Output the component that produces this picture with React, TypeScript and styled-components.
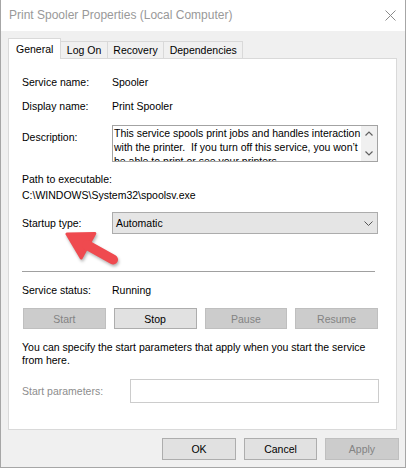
import { FC } from 'react'
import styled, { createGlobalStyle } from 'styled-components'

const Global = createGlobalStyle`
  html, body {
    margin: 0;
    padding: 0;
    background: #fff;
  }
  body {
    font-family: 'Liberation Sans', Arial, sans-serif;
    font-size: 10.5px;
    color: #000;
  }
  * {
    box-sizing: border-box;
  }
`

const Window = styled.div`
  position: relative;
  width: 406px;
  height: 468px;
  border: 1px solid #a6a6a6;
  border-top: none;
  background: #f0f0f0;
  display: flex;
  flex-direction: column;
`
const TitleBar = styled.div`
  height: 31px;
  background: #fff;
  display: flex;
  align-items: center;
  justify-content: space-between;
  padding: 0 9px 1px 8px;
`
const Title = styled.span`
  font-size: 12px;
  color: #999;
`
const Body = styled.div`
  flex: 1;
  padding: 7px 8px 0 7px;
  display: flex;
  flex-direction: column;
`
const TabStrip = styled.div`
  display: flex;
  align-items: flex-end;
  margin-bottom: -1px;
  position: relative;
  z-index: 1;
`
const Tab = styled.div<{ $active?: boolean }>`
  display: flex;
  align-items: center;
  border: 1px solid #d9d9d9;
  border-bottom: none;
  white-space: nowrap;
  background: ${p => (p.$active ? '#fff' : '#f0f0f0')};
  height: ${p => (p.$active ? '21px' : '17px')};
  margin-bottom: ${p => (p.$active ? '0' : '1px')};
  padding: 0 ${p => (p.$active ? '7px' : '5.5px')};
  position: relative;
  z-index: ${p => (p.$active ? 2 : 1)};
  & + & {
    margin-left: -1px;
  }
`
const Panel = styled.div`
  height: 372px;
  border: 1px solid #d9d9d9;
  background: #fff;
  padding: 0 18px 0 13px;
  display: flex;
  flex-direction: column;
`
const Row = styled.div<{ $mt: number; $label?: number; $align?: string }>`
  display: grid;
  grid-template-columns: ${p => p.$label ?? 90}px 1fr;
  align-items: ${p => p.$align ?? 'center'};
  margin-top: ${p => p.$mt}px;
  line-height: 14px;
`
const Line = styled.div<{ $mt: number }>`
  margin-top: ${p => p.$mt}px;
  line-height: 14px;
  white-space: nowrap;
`
const Label = styled.span<{ $mt?: number; $disabled?: boolean }>`
  margin-top: ${p => p.$mt ?? 0}px;
  color: ${p => (p.$disabled ? '#8d8d8d' : '#000')};
`
const TextBox = styled.div`
  height: 37px;
  border: 1px solid #a3a3a3;
  display: grid;
  grid-template-columns: 1fr 16px;
  overflow: hidden;
`
const TextContent = styled.div`
  padding-left: 1px;
  line-height: 14px;
  overflow: hidden;
`
const ScrollBar = styled.div`
  background: #f0f0f0;
  display: flex;
  flex-direction: column;
  align-items: center;
  justify-content: space-between;
  padding: 5px 0 5px;
`
const Select = styled.div`
  height: 22px;
  border: 1px solid #acacac;
  background: #e5e5e5;
  display: flex;
  align-items: center;
  justify-content: space-between;
  padding: 0 4px 0 3px;
`
const Separator = styled.div`
  height: 1px;
  background: #a0a0a0;
  margin: 37px 3px 0 0;
`
const ButtonRow = styled.div`
  display: grid;
  grid-template-columns: repeat(4, 1fr);
  column-gap: 8px;
  padding-left: 1px;
  margin-top: 11px;
`
const Button = styled.div<{ $disabled?: boolean; $width?: number; $height?: number }>`
  height: ${p => p.$height ?? 21}px;
  width: ${p => (p.$width ? `${p.$width}px` : 'auto')};
  display: flex;
  align-items: center;
  justify-content: center;
  background: ${p => (p.$disabled ? '#cccccc' : '#e1e1e1')};
  border: 1px solid ${p => (p.$disabled ? '#bfbfbf' : '#adadad')};
  color: ${p => (p.$disabled ? '#838383' : '#000')};
`
const Paragraph = styled.p`
  margin: 12px 0 0;
  line-height: 13px;
`
const Input = styled.div`
  height: 24px;
  margin-right: -1px;
  border: 1px solid #cccccc;
  background: #fff;
`
const Footer = styled.div`
  display: flex;
  justify-content: flex-end;
  gap: 8px;
  margin: 8px -2px 0 0;
`
const ArrowMark = styled.svg`
  position: absolute;
  left: 60px;
  top: 228px;
  filter: drop-shadow(1px 2px 1.5px rgba(0, 0, 0, 0.3));
`

const Chevron: FC<{ up?: boolean }> = ({ up }) => (
  <svg width="8" height="5" viewBox="0 0 8 5">
    <path
      d={up ? 'M0.5 4.5 L4 1 L7.5 4.5' : 'M0.5 0.5 L4 4 L7.5 0.5'}
      fill="none"
      stroke="#606060"
      strokeWidth="1.2"
    />
  </svg>
)

const App: FC = () => {
  return (
    <>
      <Global />
      <Window>
        <TitleBar>
          <Title>Print Spooler Properties (Local Computer)</Title>
          <svg width="11" height="11" viewBox="0 0 11 11">
            <path d="M0.5 0.5 L10.5 10.5 M10.5 0.5 L0.5 10.5" stroke="#8a8a8a" strokeWidth="1" />
          </svg>
        </TitleBar>
        <Body>
          <TabStrip>
            <Tab $active>General</Tab>
            <Tab>Log On</Tab>
            <Tab>Recovery</Tab>
            <Tab>Dependencies</Tab>
          </TabStrip>
          <Panel>
            <Row $mt={16}>
              <Label>Service name:</Label>
              <span>Spooler</span>
            </Row>
            <Row $mt={10}>
              <Label>Display name:</Label>
              <span>Print Spooler</span>
            </Row>
            <Row $mt={12} $align="start">
              <Label $mt={5}>Description:</Label>
              <TextBox>
                <TextContent>
                  This service spools print jobs and handles interaction with the printer.&nbsp; If you
                  turn off this service, you won’t be able to print or see your printers.
                </TextContent>
                <ScrollBar>
                  <Chevron up />
                  <Chevron />
                </ScrollBar>
              </TextBox>
            </Row>
            <Line $mt={10}>Path to executable:</Line>
            <Line $mt={2}>C:\WINDOWS\System32\spoolsv.exe</Line>
            <Row $mt={10}>
              <Label>Startup type:</Label>
              <Select>
                <span>Automatic</span>
                <svg width="9" height="5" viewBox="0 0 9 5">
                  <path d="M0.5 0.5 L4.5 4.5 L8.5 0.5" fill="none" stroke="#555" strokeWidth="1" />
                </svg>
              </Select>
            </Row>
            <Separator />
            <Row $mt={11}>
              <Label>Service status:</Label>
              <span>Running</span>
            </Row>
            <ButtonRow>
              <Button $disabled>Start</Button>
              <Button>Stop</Button>
              <Button $disabled>Pause</Button>
              <Button $disabled>Resume</Button>
            </ButtonRow>
            <Paragraph>
              You can specify the start parameters that apply when you start the service from here.
            </Paragraph>
            <Row $mt={12} $label={108}>
              <Label $disabled>Start parameters:</Label>
              <Input />
            </Row>
          </Panel>
          <Footer>
            <Button $width={74} $height={22}>OK</Button>
            <Button $width={73} $height={22}>Cancel</Button>
            <Button $width={74} $height={22} $disabled>Apply</Button>
          </Footer>
        </Body>
        <ArrowMark width="66" height="44" viewBox="0 0 66 44">
          <polygon
            points="6,6 33.8,5.4 20.2,29.9"
            fill="#ef4a4f"
            stroke="#ef4a4f"
            strokeWidth="3"
            strokeLinejoin="round"
          />
          <line x1="26" y1="17" x2="52" y2="31.5" stroke="#ef4a4f" strokeWidth="10" strokeLinecap="round" />
        </ArrowMark>
      </Window>
    </>
  )
}

export default App
